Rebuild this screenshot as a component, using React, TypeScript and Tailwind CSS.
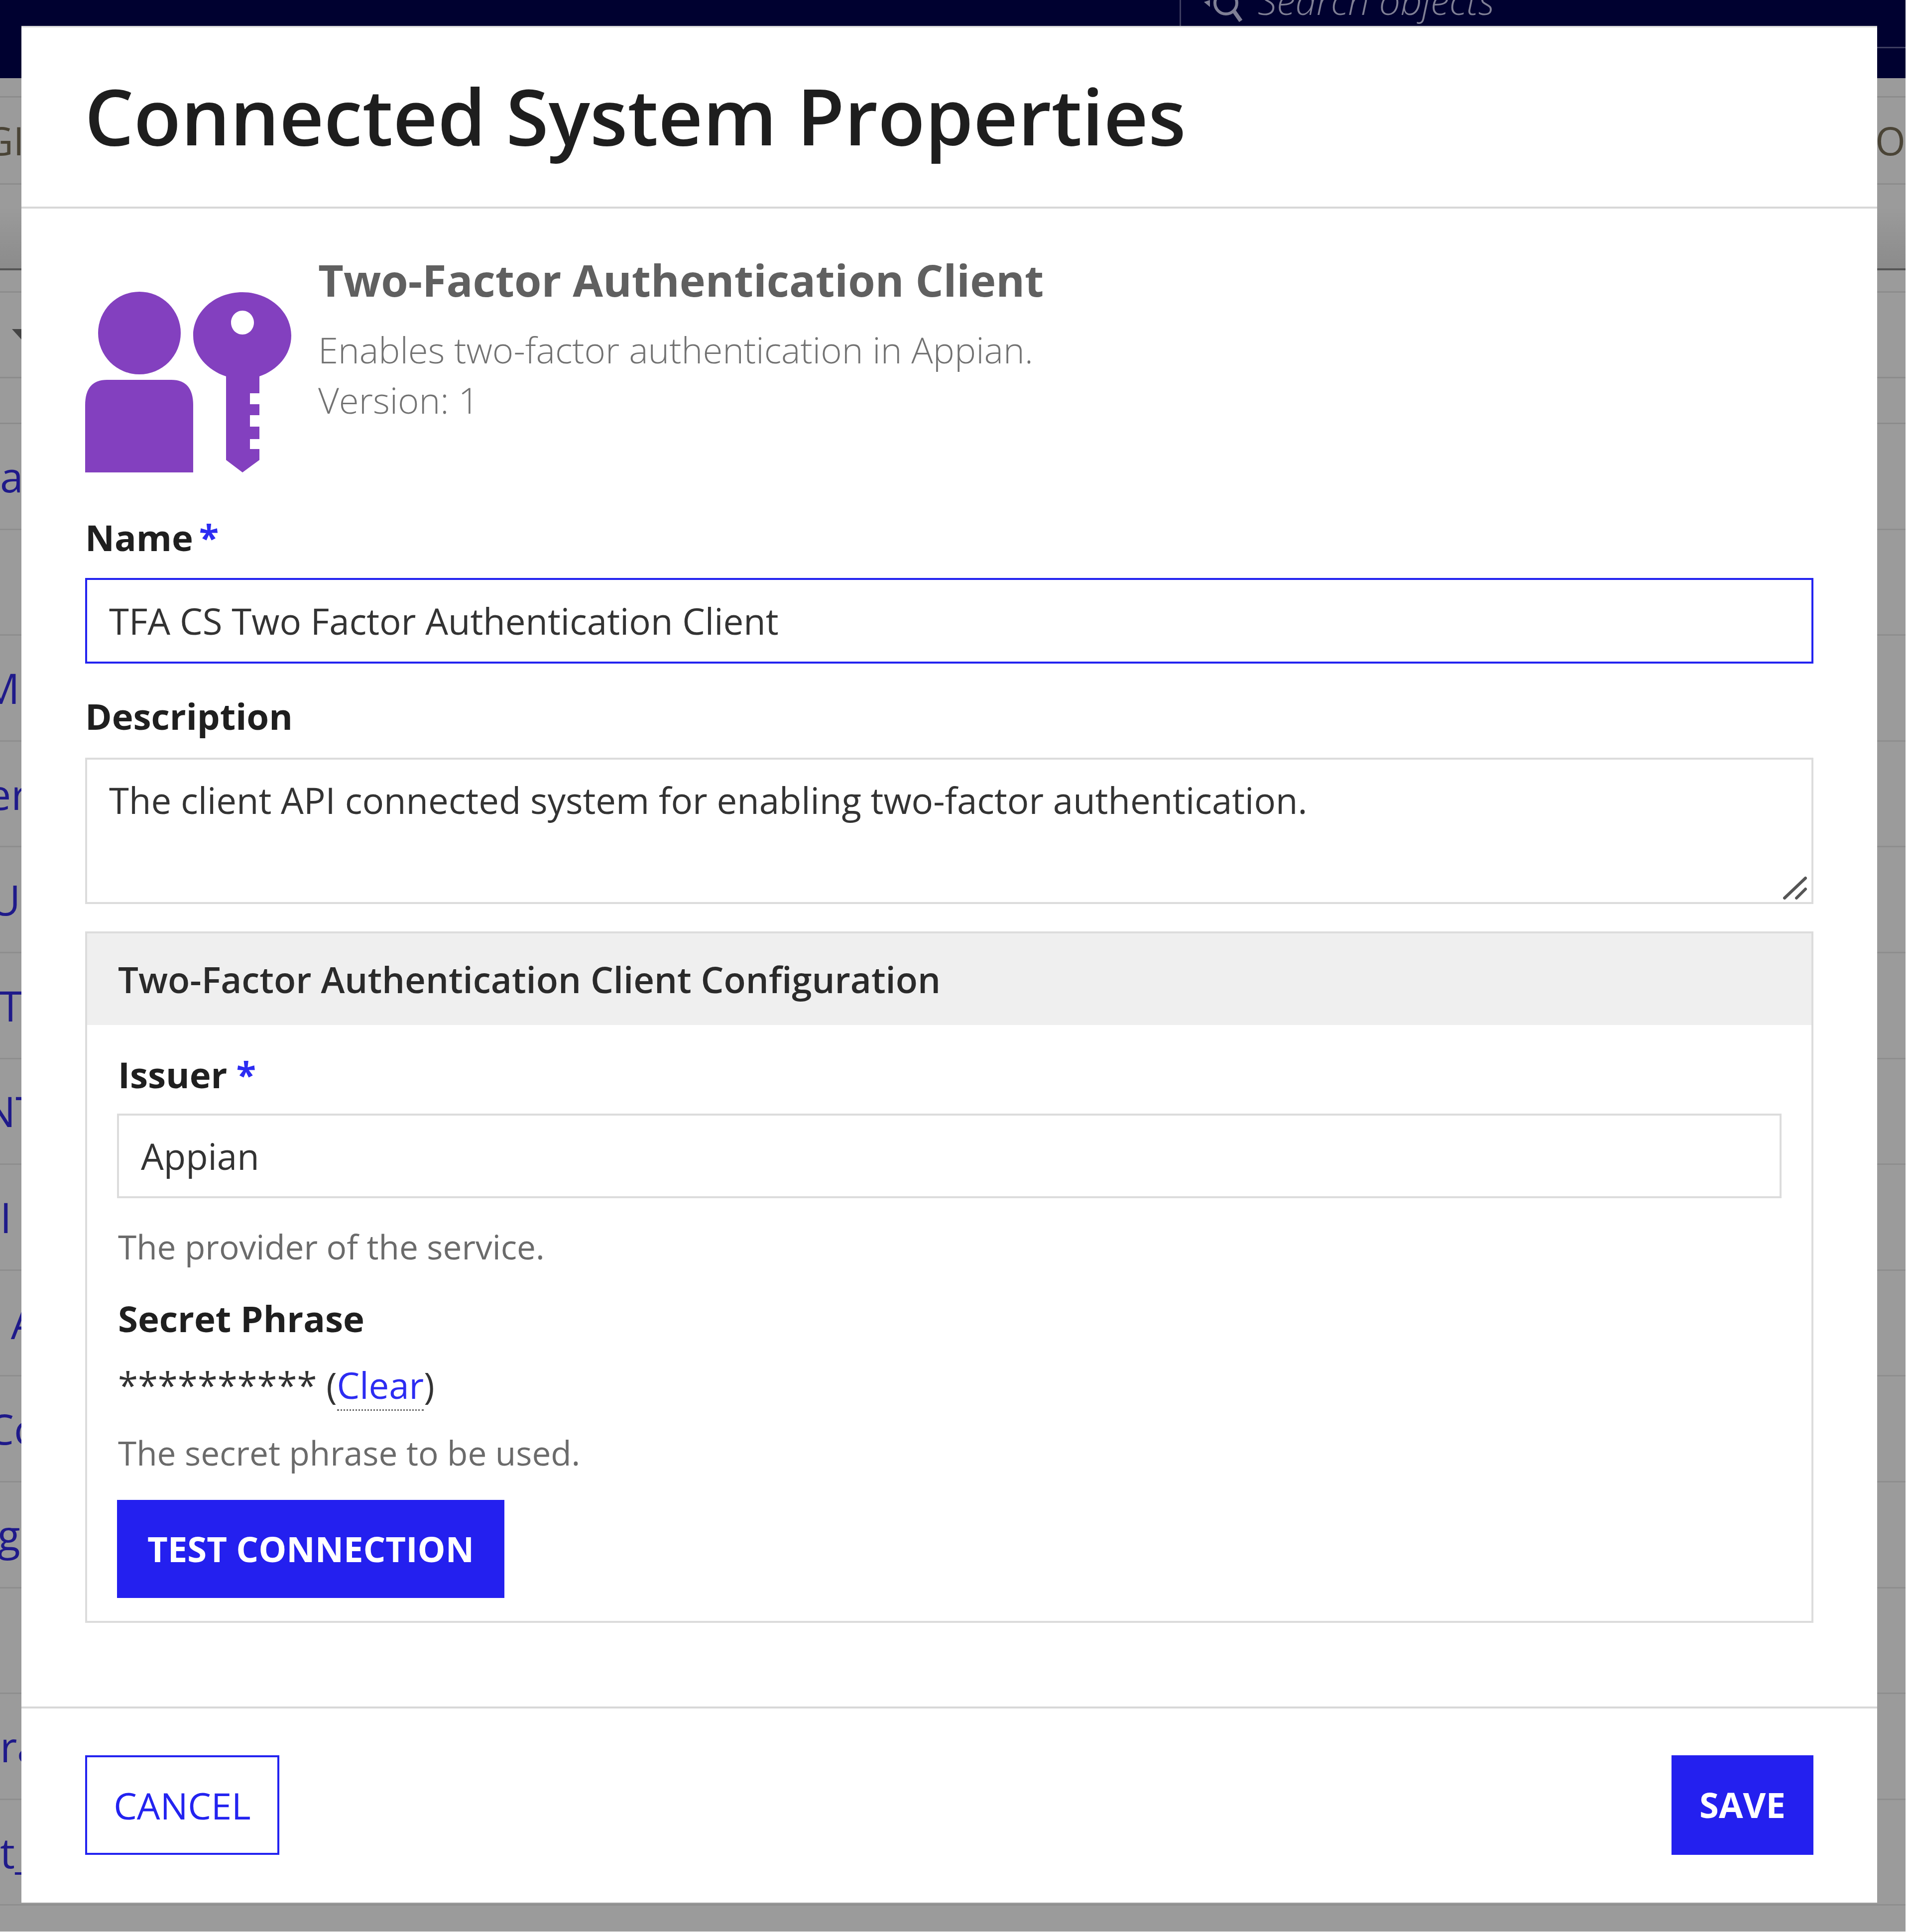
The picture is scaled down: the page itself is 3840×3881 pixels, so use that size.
const rows = [
  { label: 'a', offset: 'ml-[0px]' },
  { label: '', offset: 'ml-[0px]' },
  { label: 'M', offset: 'ml-[-36px]' },
  { label: 'er', offset: 'ml-[-25px]' },
  { label: 'U', offset: 'ml-[-20px]' },
  { label: 'T_', offset: 'ml-[-2px]' },
  { label: 'NT', offset: 'ml-[-32px]' },
  { label: 'I A', offset: 'ml-[0px]' },
  { label: ' A', offset: 'ml-[0px]' },
  { label: 'Co', offset: 'ml-[-25px]' },
  { label: 'ge', offset: 'ml-[-5px]' },
  { label: '', offset: 'ml-[0px]' },
  { label: 'ra', offset: 'ml-[0px]' },
  { label: 't_', offset: 'ml-[0px]' },
];

function ProductIcon() {
  return (
    <svg className="w-[414px] h-[363px]" viewBox="171 587 414 363" fill="#8340bf">
      <ellipse cx="280" cy="670" rx="83" ry="83" />
      <path d="M171 950V815Q171 764 215 764H344Q388 764 388 815V950Z" />
      <path
        fillRule="evenodd"
        d="M487 588C541 588 585 627 585 675C585 714 557 745 521 757V791H502V813H521V835H502V858H521V883H502V903H521V925L487 950L454 925V757C417 745 388 714 388 675C388 627 432 588 487 588ZM487 625C474 625 464 636 464 649C464 662 474 673 487 673C500 673 510 662 510 649C510 636 500 625 487 625Z"
      />
    </svg>
  );
}

function ResizeGrip() {
  return (
    <svg className="absolute right-[12px] bottom-[6px] w-[50px] h-[50px]" viewBox="0 0 50 50" fill="none" stroke="#555555" strokeWidth="6" strokeLinecap="round">
      <path d="M4 44L46 4" />
      <path d="M28 44L46 26" />
    </svg>
  );
}

function FieldLabel({ text, required, starGap = 'ml-[12px]' }: { text: string; required?: boolean; starGap?: string }) {
  return (
    <div className="text-[72.5px] leading-[106px] font-bold text-[#1f1f1f]">
      {text}
      {required && <span className={`text-[#2c2cf2] ${starGap}`}>*</span>}
    </div>
  );
}

export default function App() {
  return (
    <div className="relative w-[3840px] h-[3881px] bg-white overflow-hidden font-['Open_Sans',sans-serif]">
      {/* page behind the dialog */}
      <div className="w-[3827px] h-[3880px] bg-[#9b9b9b] flex flex-col">
        <div className="h-[157px] bg-[#000130] flex items-start relative shrink-0 overflow-hidden">
          <div className="ml-[2369px] w-[3px] h-[60px] bg-[#3d3d60]" />
          <svg className="ml-[46px] w-[80px] h-[50px]" viewBox="0 0 80 50" fill="none" stroke="#7f7f95" strokeWidth="6">
            <path d="M0 4L12 0V14Z" fill="#7f7f95" stroke="none" />
            <circle cx="44" cy="6" r="22" />
            <path d="M60 22L74 42" strokeWidth="8" />
          </svg>
          <div className="ml-[28px] mt-[-64px] text-[76px] leading-[130px] italic font-light text-[#7f7f95]">Search objects</div>
          <div className="absolute right-0 top-[94px] w-[57px] h-[3px] bg-[#3d3d60]" />
        </div>
        <div className="h-[39px] border-b-[3px] border-[#8c8c8c] shrink-0" />
        <div className="h-[175px] border-b-[3px] border-[#8c8c8c] shrink-0 flex items-center justify-between text-[78px] text-[#4a4436]">
          <span className="ml-[-30px]">GI</span>
          <span>O</span>
        </div>
        <div className="h-[45px] shrink-0" />
        <div className="h-[127px] border-b-[4px] border-[#555555] shrink-0 bg-gradient-to-b from-[#9b9b9b] to-[#8b8b8b]" />
        <div className="h-[45px] border-b-[3px] border-[#8c8c8c] shrink-0" />
        <div className="h-[172px] border-b-[3px] border-[#8c8c8c] shrink-0 flex items-center">
          <svg className="ml-[24px] mt-[-2px] w-[20px] h-[22px]" viewBox="0 0 20 22" fill="#444444">
            <path d="M0 0H20V22Z" />
          </svg>
        </div>
        <div className="h-[92px] border-b-[3px] border-[#8c8c8c] shrink-0" />
        {rows.map((row, i) => (
          <div key={i} className="h-[212.6px] border-b-[3px] border-[#8e8e8e] shrink-0 flex items-center text-[84px] text-[#1f1a8a] whitespace-pre">
            <span className={row.offset}>{row.label}</span>
          </div>
        ))}
      </div>

      {/* dialog */}
      <div className="absolute left-[43px] top-[52px] w-[3727px] h-[3770px] bg-white border-t-[3px] border-[#d8d8d8] flex flex-col">
        <div className="h-[364px] border-b-[4px] border-[#d8d8d8] pl-[127px] pt-[87px] shrink-0">
          <h1 className="text-[155.5px] leading-[180px] font-semibold text-[#1e1e1e]">Connected System Properties</h1>
        </div>

        <div className="flex-1 px-[128px] flex flex-col">
          <div className="flex mt-[167px] h-[363px]">
            <ProductIcon />
            <div className="ml-[54px] mt-[-79px]">
              <div className="text-[88px] leading-[110px] font-bold text-[#606060]">Two-Factor Authentication Client</div>
              <div className="text-[72.5px] leading-[101px] font-light text-[#727272] mt-[35px]">Enables two-factor authentication in Appian.</div>
              <div className="text-[72.5px] leading-[101px] font-light text-[#727272]">Version: 1</div>
            </div>
          </div>

          <div className="mt-[77px]"><FieldLabel text="Name" required /></div>
          <input
            readOnly
            value="TFA CS Two Factor Authentication Client"
            className="mt-[29px] h-[172px] w-full border-[4px] border-[#2323f0] px-[44px] text-[72.5px] text-[#333333] outline-none"
          />

          <div className="mt-[52px]"><FieldLabel text="Description" /></div>
          <div className="relative mt-[31px] h-[294px]">
            <textarea
              readOnly
              value="The client API connected system for enabling two-factor authentication."
              className="block w-full h-full resize-none border-[4px] border-[#dcdcdc] px-[44px] pt-[28px] text-[72.5px] leading-[106px] text-[#333333] outline-none"
            />
            <ResizeGrip />
          </div>

          <div className="mt-[55px] h-[1389px] border-[4px] border-[#dcdcdc] flex flex-col">
            <div className="h-[184px] shrink-0 bg-[#efefef] pl-[62px] pr-[60px] flex items-center text-[72.5px] font-semibold text-[#2a2a2a]">
              Two-Factor Authentication Client Configuration
            </div>
            <div className="px-[60px] flex flex-col">
              <div className="mt-[46px] pl-[2px]"><FieldLabel text="Issuer" required starGap="ml-[18px]" /></div>
              <input
                readOnly
                value="Appian"
                className="mt-[26px] h-[170px] w-full border-[4px] border-[#dcdcdc] px-[44px] text-[72.5px] text-[#333333] outline-none"
              />
              <div className="mt-[44px] pl-[2px] text-[67.5px] leading-[106px] text-[#6b6b6b]">The provider of the service.</div>
              <div className="mt-[38px] pl-[2px]"><FieldLabel text="Secret Phrase" /></div>
              <div className="mt-[28px] pl-[2px] text-[72.5px] leading-[106px] text-[#333333]">
                ********** (<span className="text-[#2c2cf2] border-b-[3px] border-dotted border-[#666666]">Clear</span>)
              </div>
              <div className="mt-[30px] pl-[2px] text-[67.5px] leading-[106px] text-[#6b6b6b]">The secret phrase to be used.</div>
              <button className="mt-[42px] w-[778px] h-[197px] bg-[#2420ef] text-white text-[70.5px] font-bold">TEST CONNECTION</button>
            </div>
          </div>
        </div>

        <div className="h-[394px] border-t-[4px] border-[#d8d8d8] px-[128px] pt-[94px] flex justify-between shrink-0">
          <button className="w-[390px] h-[200px] border-[4px] border-[#2323f0] text-[#2323f0] text-[74px] font-medium">CANCEL</button>
          <button className="w-[285px] h-[200px] bg-[#2420ef] text-white text-[70.5px] font-bold">SAVE</button>
        </div>
      </div>
    </div>
  );
}
